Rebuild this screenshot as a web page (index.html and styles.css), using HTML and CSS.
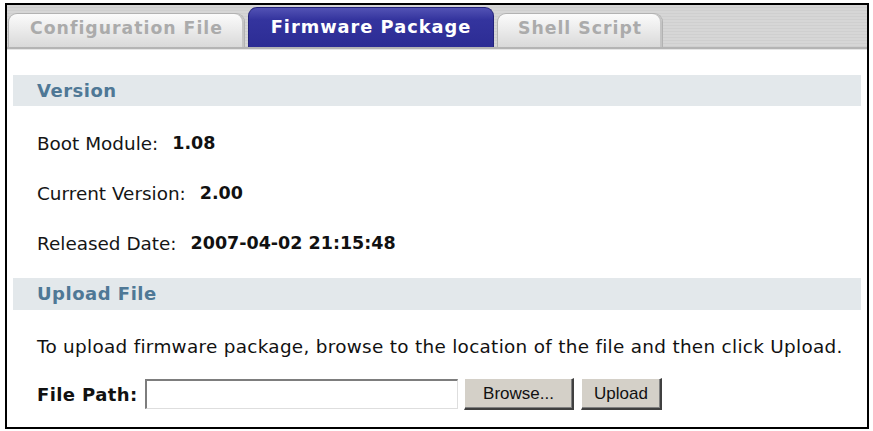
FILE: index.html
```html
<!DOCTYPE html>
<html>
<head>
<meta charset="utf-8">
<link rel="stylesheet" href="styles.css">
</head>
<body>
<div class="frame">
  <div class="tabbar">
    <div class="tab tab-config">Configuration File</div>
    <div class="tab tab-active tab-firmware">Firmware Package</div>
    <div class="tab tab-shell">Shell Script</div>
  </div>
  <div class="content">
    <div class="section-head">Version</div>
    <div class="row"><span class="label">Boot Module:</span><span class="value">1.08</span></div>
    <div class="row"><span class="label">Current Version:</span><span class="value">2.00</span></div>
    <div class="row"><span class="label">Released Date:</span><span class="value">2007-04-02 21:15:48</span></div>
    <div class="section-head section-upload">Upload File</div>
    <div class="row row-text">To upload firmware package, browse to the location of the file and then click Upload.</div>
    <div class="row row-file">
      <span class="file-label">File Path:</span>
      <span class="file-input"></span>
      <span class="btn btn-browse">Browse...</span>
      <span class="btn btn-upload">Upload</span>
    </div>
  </div>
</div>
</body>
</html>
```

FILE: styles.css
```css
html, body {
  margin: 0;
  padding: 0;
  background: #ffffff;
}

.frame {
  margin: 3px 0 0 5px;
  width: 860px;
  height: 422px;
  border: 2px solid #000000;
  background: #ffffff;
  display: flex;
  flex-direction: column;
  font-family: "DejaVu Sans", Verdana, sans-serif;
  color: #111111;
  overflow: hidden;
}

.tabbar {
  height: 42px;
  flex: none;
  display: flex;
  align-items: flex-end;
  padding-left: 1px;
  gap: 3px;
  background: repeating-linear-gradient(to bottom, #d6d6d6 0px, #d6d6d6 2px, #cfcfcf 2px, #cfcfcf 3px);
  border-bottom: 2px solid #b4b4b4;
  box-shadow: 0 1px 0 #e6e6e6;
}

.tab {
  height: 34px;
  box-sizing: border-box;
  display: flex;
  align-items: center;
  justify-content: center;
  padding-bottom: 5px;
  font-weight: bold;
  font-size: 17.3px;
  letter-spacing: 1px;
  color: #ababab;
  background: linear-gradient(to bottom, #fbfbfb 0%, #ececec 45%, #d9d9d9 100%);
  border: 1px solid #b2b2b2;
  border-bottom: none;
  border-radius: 9px 9px 0 0;
  box-shadow: inset -2px 0 0 #c4c4c4;
}

.tab-config {
  width: 237px;
}

.tab-firmware {
  width: 246px;
}

.tab-shell {
  width: 166px;
}

.tab-active {
  height: 40px;
  color: #ffffff;
  background: linear-gradient(to bottom, #5252b4 0%, #34349e 30%, #2c2c94 100%);
  border: 1px solid #22227a;
  border-bottom: none;
  box-shadow: none;
  padding-top: 0;
  padding-bottom: 2px;
  font-size: 17.8px;
}

.content {
  padding: 26px 6px 0 6px;
  display: flex;
  flex-direction: column;
}

.section-head {
  height: 31px;
  line-height: 31px;
  padding-left: 24px;
  background: #e3e8eb;
  color: #4f7896;
  font-weight: bold;
  font-size: 18px;
  letter-spacing: 0.5px;
  margin-bottom: 12px;
}

.section-upload {
  margin-top: 10px;
  height: 32px;
  line-height: 32px;
  margin-bottom: 11px;
}

.row {
  height: 50px;
  display: flex;
  align-items: center;
  padding-left: 24px;
  font-size: 18.4px;
  white-space: nowrap;
}

.label {
  color: #151515;
}

.value {
  font-weight: bold;
  font-size: 17.5px;
  margin-left: 14px;
}

.row-text {
  letter-spacing: 0.3px;
}

.row-file {
  height: 46px;
}

.file-label {
  display: inline-block;
  width: 101px;
  font-weight: bold;
  font-size: 18px;
  letter-spacing: 0.4px;
  margin-right: 7px;
}

.file-input {
  width: 313px;
  height: 30px;
  box-sizing: border-box;
  background: #ffffff;
  border-top: 2px solid #7d7d7d;
  border-left: 2px solid #7d7d7d;
  border-right: 1px solid #dedede;
  border-bottom: 1px solid #dedede;
}

.btn {
  height: 32px;
  box-sizing: border-box;
  display: flex;
  align-items: center;
  justify-content: center;
  background: #d4d0c8;
  font-family: "Liberation Sans", Arial, sans-serif;
  font-size: 17px;
  color: #111111;
  border-top: 1px solid #ffffff;
  border-left: 1px solid #ffffff;
  border-right: 2px solid #404040;
  border-bottom: 2px solid #404040;
  box-shadow: inset -1px -1px 0 #808080;
}

.btn-browse {
  width: 110px;
  margin-left: 6px;
}

.btn-upload {
  width: 81px;
  margin-left: 7px;
}
```
